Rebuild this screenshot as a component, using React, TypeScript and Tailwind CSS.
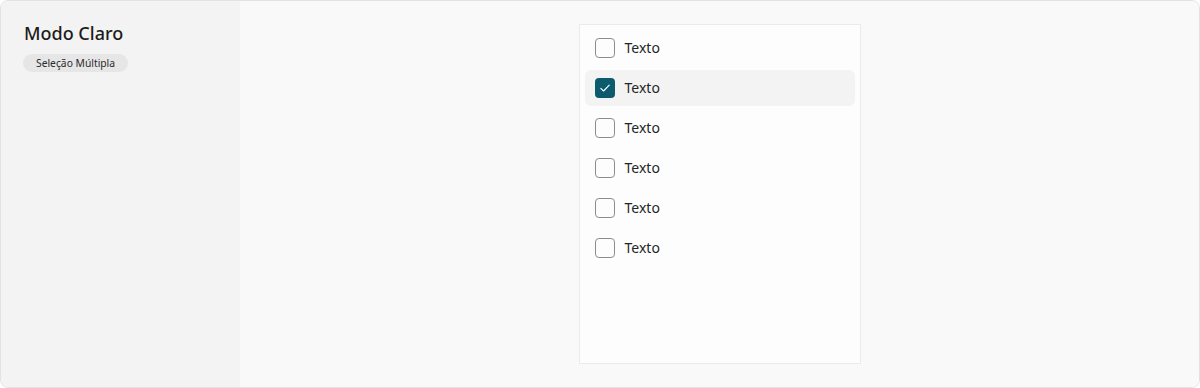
import React from "react"

const items = [
  { label: "Texto", checked: false },
  { label: "Texto", checked: true },
  { label: "Texto", checked: false },
  { label: "Texto", checked: false },
  { label: "Texto", checked: false },
  { label: "Texto", checked: false },
]

function Checkbox({ checked }: { checked: boolean }) {
  if (checked) {
    return (
      <span className="flex h-5 w-5 items-center justify-center rounded-[4px] bg-[#0b5a6e]">
        <svg width="20" height="20" viewBox="0 0 20 20" fill="none">
          <path d="M5.8 10.3L8.6 13L14.2 7.2" stroke="white" strokeWidth="1.1" strokeLinecap="round" strokeLinejoin="round" />
        </svg>
      </span>
    )
  }
  return <span className="h-5 w-5 rounded-[4px] border border-[#8c8c8c] bg-[#fdfdfd]" />
}

export default function App() {
  return (
    <div className="w-[1200px] h-[388px] flex overflow-hidden rounded-lg border border-[#e2e2e2] font-['Noto_Sans',sans-serif]">
      <div className="w-[239px] bg-[#f3f3f3] pl-[22px] pt-[18px]">
        <p className="ml-px text-lg leading-7 font-medium text-[#1c1c1c]">Modo Claro</p>
        <span className="mt-[7px] inline-block rounded-full bg-[#e6e6e6] px-[13px] text-[10.3px] leading-[18px] text-[#2a2a2a]">
          Seleção Múltipla
        </span>
      </div>
      <div className="flex-1 bg-[#f9f9f9] flex justify-center pt-[23px]">
        <div className="w-[282px] h-[340px] border border-[#ebebeb] bg-[#fdfdfd] p-[5px] flex flex-col gap-1">
          {items.map((item, i) => (
            <div
              key={i}
              className={`h-9 flex items-center gap-[10px] pl-[10px] rounded-md ${item.checked ? "bg-[#f3f3f3]" : ""}`}
            >
              <Checkbox checked={item.checked} />
              <span className="text-sm text-[#262626]">{item.label}</span>
            </div>
          ))}
        </div>
      </div>
    </div>
  )
}
